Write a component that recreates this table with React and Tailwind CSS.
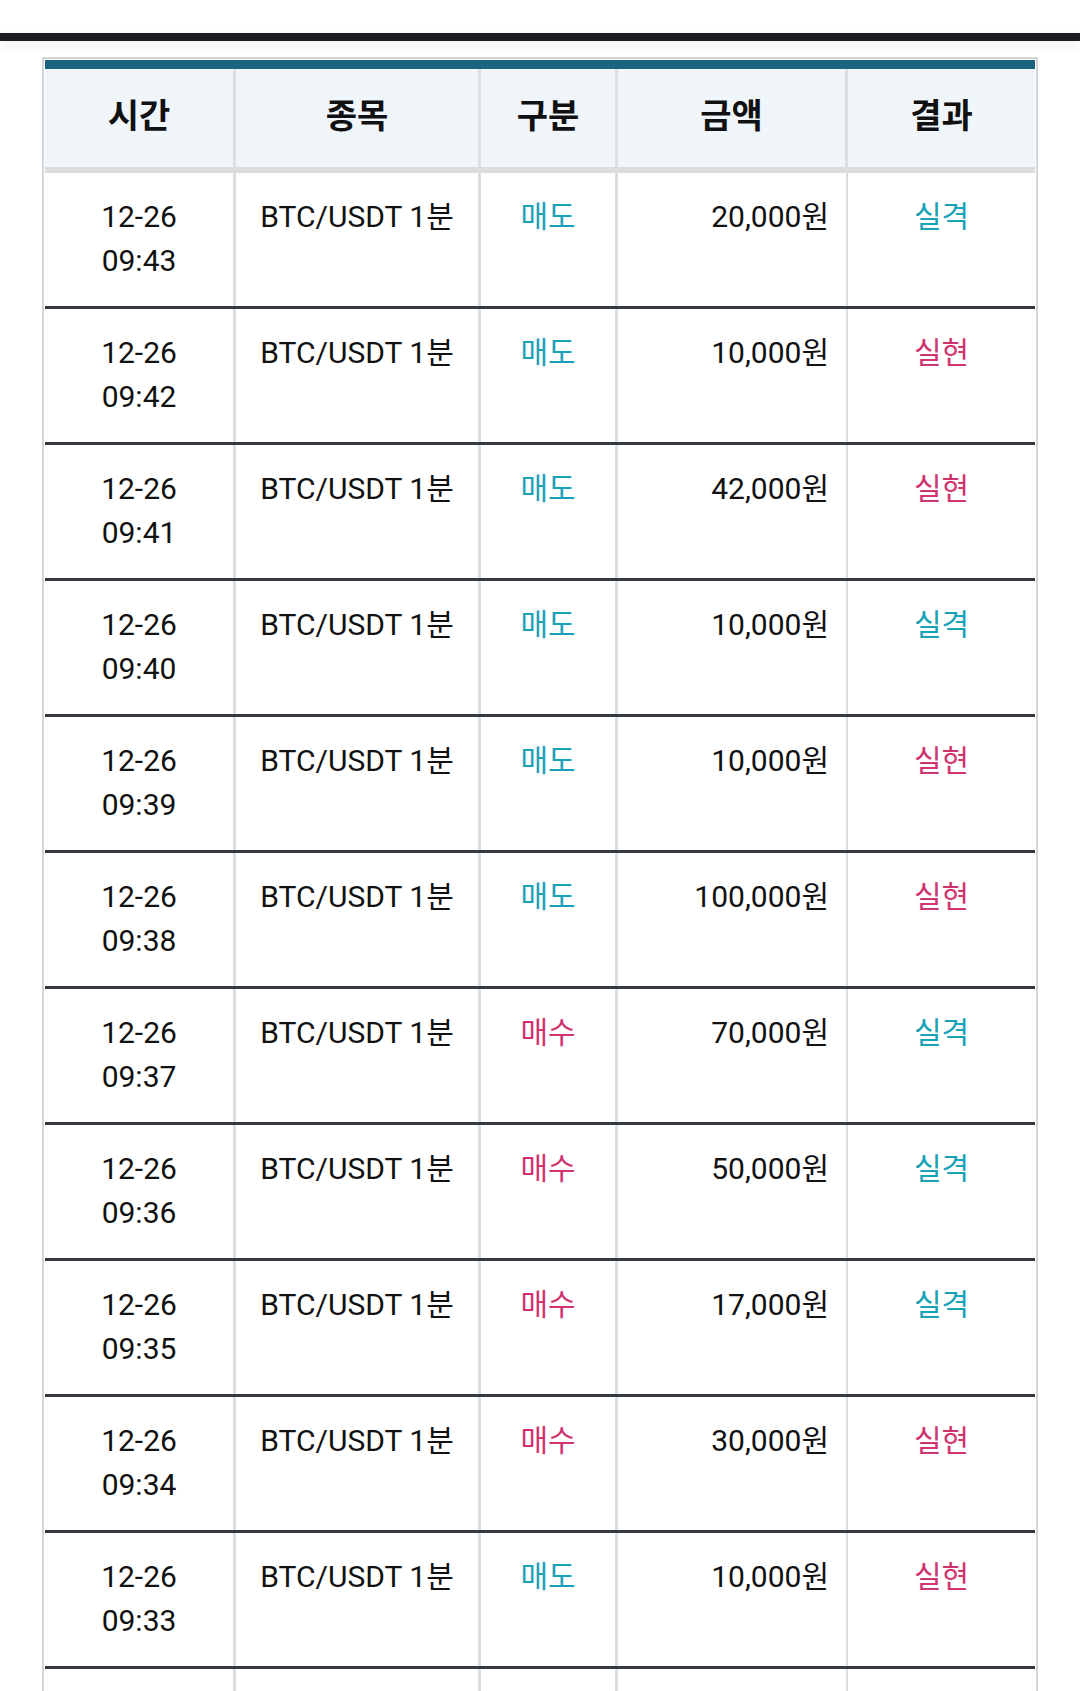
const ROWS = [
  { date: '12-26', time: '09:43', side: '매도', amount: '20,000원', result: '실격' },
  { date: '12-26', time: '09:42', side: '매도', amount: '10,000원', result: '실현' },
  { date: '12-26', time: '09:41', side: '매도', amount: '42,000원', result: '실현' },
  { date: '12-26', time: '09:40', side: '매도', amount: '10,000원', result: '실격' },
  { date: '12-26', time: '09:39', side: '매도', amount: '10,000원', result: '실현' },
  { date: '12-26', time: '09:38', side: '매도', amount: '100,000원', result: '실현' },
  { date: '12-26', time: '09:37', side: '매수', amount: '70,000원', result: '실격' },
  { date: '12-26', time: '09:36', side: '매수', amount: '50,000원', result: '실격' },
  { date: '12-26', time: '09:35', side: '매수', amount: '17,000원', result: '실격' },
  { date: '12-26', time: '09:34', side: '매수', amount: '30,000원', result: '실현' },
  { date: '12-26', time: '09:33', side: '매도', amount: '10,000원', result: '실현' },
];

const TEAL = 'text-[#17a2b8]';
const PINK = 'text-[#d0336f]';

const GRID = 'grid grid-cols-[191px_245px_137px_230px_187px]';
const SEP = 'border-r-[3px] border-[#dcdfe2]';

const HeaderCell = ({ children, last }) => (
  <div
    className={`flex items-center justify-center pb-[4px] text-[34px] font-bold text-[#111] ${
      last ? '' : SEP
    }`}
  >
    {children}
  </div>
);

const App = () => {
  return (
    <div
      className="h-[1691px] overflow-hidden bg-white"
      style={{ fontFamily: 'Roboto, "Noto Sans CJK KR", sans-serif' }}
    >
      {/* top bar */}
      <div className="mt-[33px] h-[8px] bg-[#1c1d21] shadow-[0_5px_12px_rgba(0,0,0,0.07)]" />

      {/* table */}
      <div className="ml-[42px] mt-[16px] w-[996px] border-2 border-[#d3d6d9] p-px">
        <div className="h-[9px] bg-[#1a6480]" />

        <div className={`${GRID} h-[104px] bg-[#f0f5f9] border-b-[6px] border-[#dcdcdc]`}>
          <HeaderCell>시간</HeaderCell>
          <HeaderCell>종목</HeaderCell>
          <HeaderCell>구분</HeaderCell>
          <HeaderCell>금액</HeaderCell>
          <HeaderCell last>결과</HeaderCell>
        </div>

        {ROWS.map((r, i) => (
          <div
            key={i}
            className={`${GRID} h-[136px] border-b-[3px] border-[#343a40] text-[30px] leading-[44px] text-[#111]`}
          >
            <div className={`${SEP} pt-[22px] text-center`}>
              <div>{r.date}</div>
              <div>{r.time}</div>
            </div>
            <div className={`${SEP} pt-[22px] text-center`}>BTC/USDT 1분</div>
            <div className={`${SEP} pt-[22px] text-center ${r.side === '매도' ? TEAL : PINK}`}>
              {r.side}
            </div>
            <div className="border-r-2 border-[#dcdfe2] pt-[22px] pr-[17px] text-right">
              {r.amount}
            </div>
            <div className={`pt-[22px] text-center ${r.result === '실격' ? TEAL : PINK}`}>
              {r.result}
            </div>
          </div>
        ))}

        {/* next row, only its top edge is on screen */}
        <div className={`${GRID} h-[136px]`}>
          <div className={SEP} />
          <div className={SEP} />
          <div className={SEP} />
          <div className="border-r-2 border-[#dcdfe2]" />
          <div />
        </div>
      </div>
    </div>
  );
};

export default App;
